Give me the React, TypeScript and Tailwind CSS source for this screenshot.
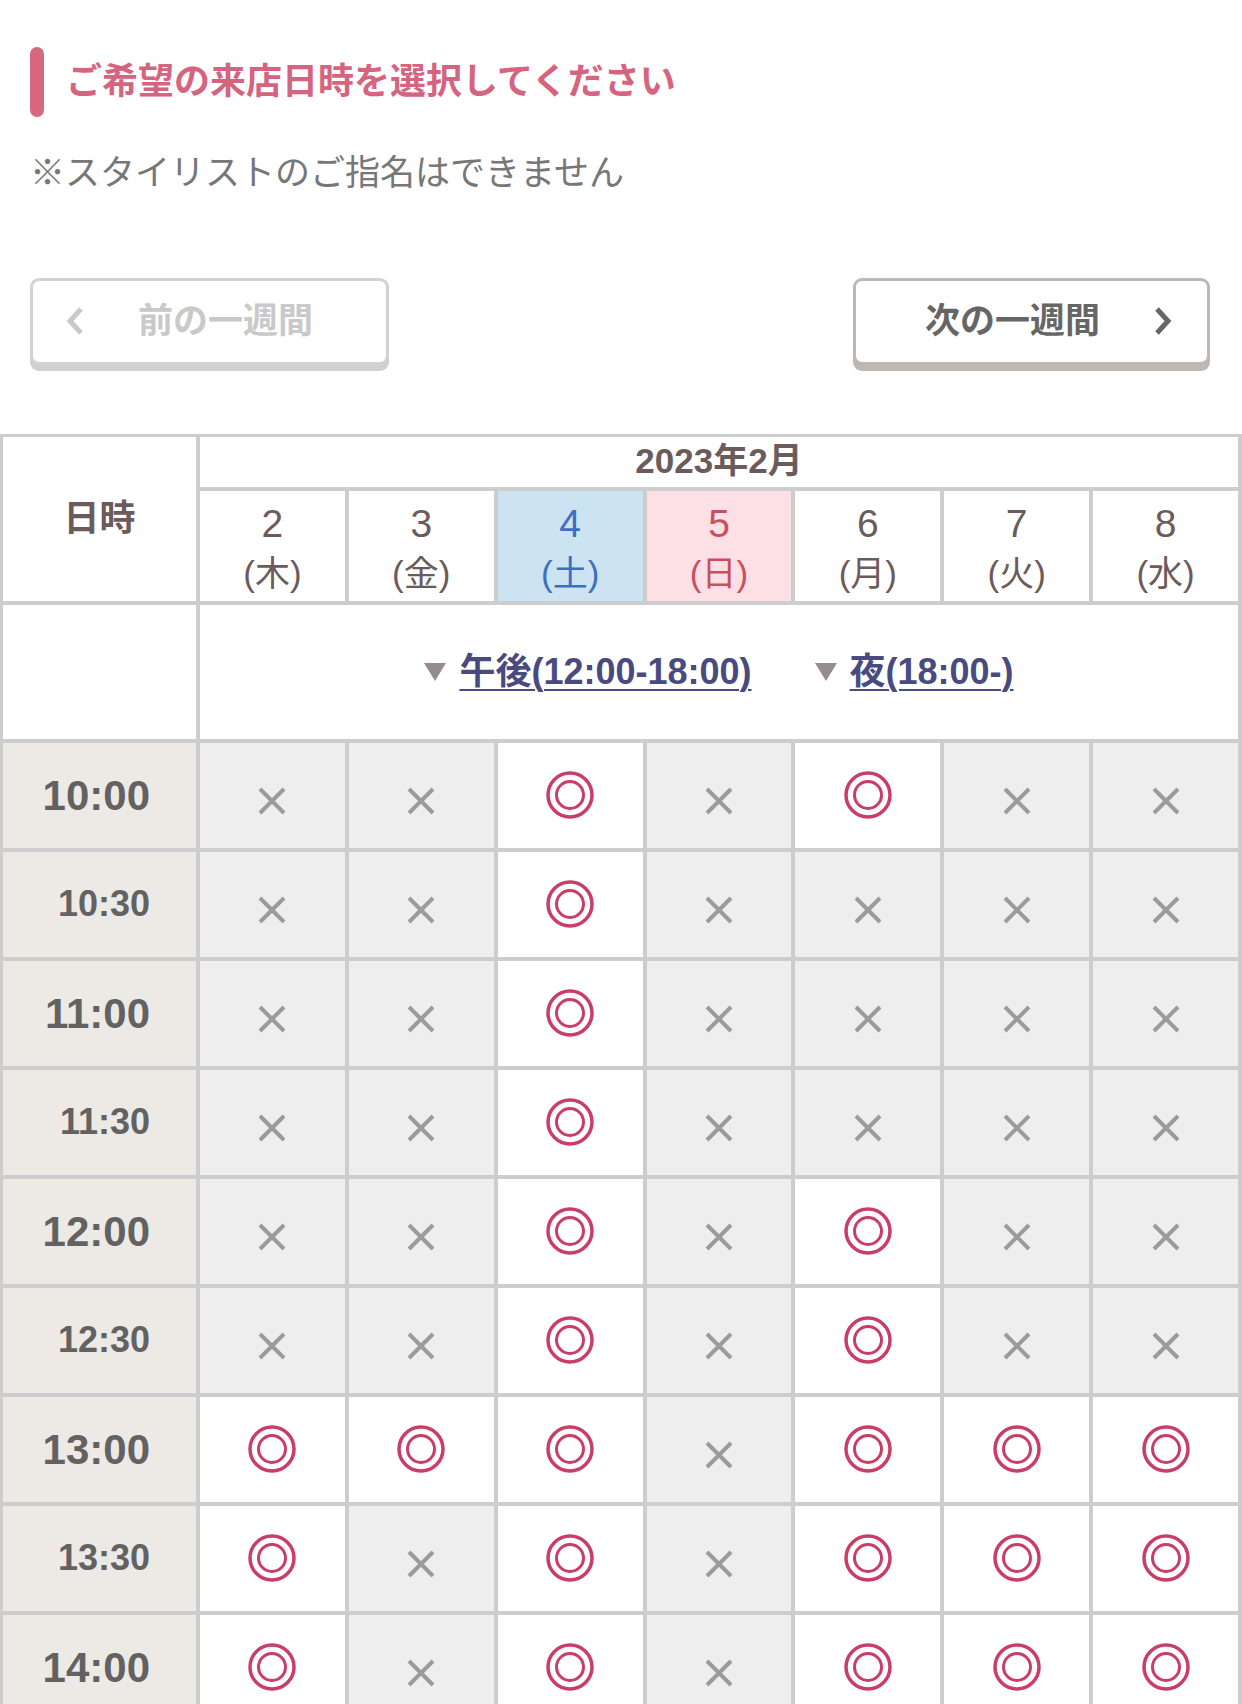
import React from "react";

const days = [
  { d: "2", w: "木", kind: "" },
  { d: "3", w: "金", kind: "" },
  { d: "4", w: "土", kind: "sat" },
  { d: "5", w: "日", kind: "sun" },
  { d: "6", w: "月", kind: "" },
  { d: "7", w: "火", kind: "" },
  { d: "8", w: "水", kind: "" },
];

const slots: [string, string][] = [
  ["10:00", "XXOXOXX"],
  ["10:30", "XXOXXXX"],
  ["11:00", "XXOXXXX"],
  ["11:30", "XXOXXXX"],
  ["12:00", "XXOXOXX"],
  ["12:30", "XXOXOXX"],
  ["13:00", "OOOXOOO"],
  ["13:30", "OXOXOOO"],
  ["14:00", "OXOXOOO"],
  ["14:30", "OXOXOOO"],
];

const Circle = () => (
  <svg width="50" height="50" viewBox="0 0 50 50" fill="none">
    <circle cx="25" cy="25" r="22" stroke="#c93d66" strokeWidth="3.5" />
    <circle cx="25" cy="25" r="13.5" stroke="#c93d66" strokeWidth="3" />
  </svg>
);

const Cross = () => (
  <svg width="30" height="30" viewBox="0 0 30 30" className="mt-[12px]">
    <path d="M3 3L27 27M27 3L3 27" stroke="#9b9b9b" strokeWidth="4" />
  </svg>
);

const Chevron = ({ dir, color }: { dir: "left" | "right"; color: string }) => (
  <svg width="22" height="32" viewBox="0 0 22 32" fill="none">
    <path
      d={dir === "left" ? "M17 4L6 16L17 28" : "M5 4L16 16L5 28"}
      stroke={color}
      strokeWidth="5"
      strokeLinejoin="miter"
    />
  </svg>
);

const Triangle = () => (
  <svg width="22" height="18" viewBox="0 0 22 18">
    <path d="M0 0H22L11 18Z" fill="#978c8c" />
  </svg>
);

export default function App() {
  return (
    <div className="h-[1704px] overflow-hidden bg-white font-['Liberation_Sans','Noto_Sans_CJK_JP',sans-serif]">
      <div className="px-[30px] pt-[47px]">
        <div className="flex items-center gap-[22px]">
          <div className="h-[70px] w-[14px] rounded-full bg-[#d8687f]" />
          <h2 className="text-[36px] font-bold leading-none text-[#d5647f]">
            ご希望の来店日時を選択してください
          </h2>
        </div>
        <p className="mt-[30px] text-[35px] leading-[1.5] text-[#777777]">
          ※スタイリストのご指名はできません
        </p>
      </div>

      <div className="mt-[78px] flex justify-between pl-[30px] pr-[32px]">
        <button className="flex h-[87px] w-[359px] items-center rounded-[9px] border-[3px] border-[#d2d2d2] bg-white pl-[31px] shadow-[0_6px_0_#d0d0d0]">
          <Chevron dir="left" color="#c9c9c9" />
          <span className="ml-[52px] text-[35px] font-bold text-[#c9c9c9]">前の一週間</span>
        </button>
        <button className="flex h-[87px] w-[357px] items-center rounded-[9px] border-[3px] border-[#bdb8b1] bg-white pl-[69px] shadow-[0_6px_0_#bdb8b1]">
          <span className="mr-[52px] text-[35px] font-bold text-[#666666]">次の一週間</span>
          <Chevron dir="right" color="#666666" />
        </button>
      </div>

      <div className="mt-[69px] grid grid-cols-[197px_repeat(7,minmax(0,1fr))] grid-rows-[54px_114px_138px] auto-rows-[109px] border-l-[3px] border-t-[3px] border-[#cdcdcd]">
        <div className="row-span-2 flex items-center justify-center border-b-[4px] border-r-[4px] border-[#cdcdcd] text-[36px] font-bold text-[#6b5b5b]">
          日時
        </div>
        <div className="col-span-7 flex items-center justify-center border-b-[4px] border-r-[4px] border-[#cdcdcd] text-[35px] font-bold text-[#6b5b5b]">
          2023年2月
        </div>
        {days.map((day) => (
          <div
            key={day.d}
            className={`flex flex-col items-center justify-center border-b-[4px] border-r-[4px] border-[#cdcdcd] pt-[8px] ${
              day.kind === "sat"
                ? "bg-[#cce4f2] text-[#3f6ec0]"
                : day.kind === "sun"
                ? "bg-[#fde0e6] text-[#c9505b]"
                : "bg-white text-[#6b5b5b]"
            }`}
          >
            <span className="text-[39px] leading-[1.3]">{day.d}</span>
            <span className="text-[35px] leading-[1.45]">({day.w})</span>
          </div>
        ))}
        <div className="border-b-[4px] border-r-[4px] border-[#cdcdcd]" />
        <div className="col-span-7 flex items-center justify-center gap-[63px] border-b-[4px] border-r-[4px] border-[#cdcdcd] text-[36px] font-bold text-[#484a80]">
          <span className="flex items-center gap-[13px]">
            <Triangle />
            <a className="underline decoration-2 underline-offset-[5px]">午後(12:00-18:00)</a>
          </span>
          <span className="flex items-center gap-[13px]">
            <Triangle />
            <a className="underline decoration-2 underline-offset-[5px]">夜(18:00-)</a>
          </span>
        </div>
        {slots.map(([time, marks]) => (
          <React.Fragment key={time}>
            <div
              className={`flex items-center justify-end border-b-[4px] border-r-[4px] border-[#cdcdcd] bg-[#edeae5] pr-[46px] font-bold text-[#626262] ${
                time.endsWith(":00") ? "text-[42px]" : "text-[36px]"
              }`}
            >
              {time}
            </div>
            {marks.split("").map((m, i) => (
              <div
                key={i}
                className={`flex items-center justify-center border-b-[4px] border-r-[4px] border-[#cdcdcd] ${
                  m === "O" ? "bg-white" : "bg-[#eeeeee]"
                }`}
              >
                {m === "O" ? <Circle /> : <Cross />}
              </div>
            ))}
          </React.Fragment>
        ))}
      </div>
    </div>
  );
}
